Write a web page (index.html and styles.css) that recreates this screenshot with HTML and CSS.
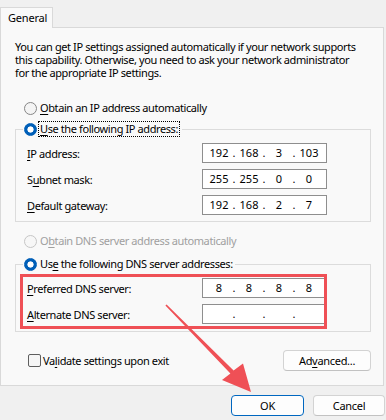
FILE: index.html
```html
<!DOCTYPE html>
<html lang="en">
<head>
<meta charset="utf-8">
<title>IPv4 Properties</title>
<link rel="stylesheet" href="styles.css">
</head>
<body>
<div class="window">
  <div class="tabs"><div class="tab">General</div></div>
  <div class="panel">
    <p class="intro">You can get IP settings assigned automatically if your network supports<br>this capability. Otherwise, you need to ask your network administrator<br>for the appropriate IP settings.</p>

    <div class="radio-row row-auto-ip"><span class="radio"></span><span class="lbl"><u>O</u>btain an IP address automatically</span></div>

    <fieldset class="group group-ip">
      <legend class="radio-row"><span class="radio checked"></span><span class="lbl focus"><u>U</u>se the following IP address:</span></legend>
      <div class="field"><span class="flabel"><u>I</u>P address:</span>
        <div class="ipbox"><span class="seg">192</span><span class="dot">.</span><span class="seg">168</span><span class="dot">.</span><span class="seg">3</span><span class="dot">.</span><span class="seg">103</span></div></div>
      <div class="field"><span class="flabel">S<u>u</u>bnet mask:</span>
        <div class="ipbox"><span class="seg">255</span><span class="dot">.</span><span class="seg">255</span><span class="dot">.</span><span class="seg">0</span><span class="dot">.</span><span class="seg">0</span></div></div>
      <div class="field"><span class="flabel"><u>D</u>efault gateway:</span>
        <div class="ipbox"><span class="seg">192</span><span class="dot">.</span><span class="seg">168</span><span class="dot">.</span><span class="seg">2</span><span class="dot">.</span><span class="seg">7</span></div></div>
    </fieldset>

    <div class="radio-row row-auto-dns disabled"><span class="radio"></span><span class="lbl">O<u>b</u>tain DNS server address automatically</span></div>

    <fieldset class="group group-dns">
      <legend class="radio-row"><span class="radio checked"></span><span class="lbl">Us<u>e</u> the following DNS server addresses:</span></legend>
      <div class="field"><span class="flabel"><u>P</u>referred DNS server:</span>
        <div class="ipbox"><span class="seg">8</span><span class="dot">.</span><span class="seg">8</span><span class="dot">.</span><span class="seg">8</span><span class="dot">.</span><span class="seg">8</span></div></div>
      <div class="field"><span class="flabel"><u>A</u>lternate DNS server:</span>
        <div class="ipbox"><span class="seg"></span><span class="dot">.</span><span class="seg"></span><span class="dot">.</span><span class="seg"></span><span class="dot">.</span><span class="seg"></span></div></div>
    </fieldset>

    <div class="footer-row">
      <label class="check-row"><span class="checkbox"></span><span>Va<u>l</u>idate settings upon exit</span></label>
      <button class="btn btn-adv" type="button">Ad<u>v</u>anced...</button>
    </div>
  </div>

  <div class="buttons">
    <button class="btn btn-ok" type="button">OK</button>
    <button class="btn btn-cancel" type="button">Cancel</button>
  </div>

  <div class="highlight"></div>
  <svg class="arrow" width="386" height="420" viewBox="0 0 386 420">
    <polygon points="166.6,304.6 233.6,370.4 243,363.5 251,392 222,380 230.4,373.6 165.4,305.4" fill="#ef5056"/>
  </svg>
</div>
</body>
</html>
```

FILE: styles.css
```css
html, body {
  margin: 0;
  padding: 0;
}

body {
  background: #f0f0f0;
  font-family: "Noto Sans", "Open Sans", sans-serif;
  font-size: 11px;
  letter-spacing: -0.4px;
  color: #000;
}

.window {
  position: relative;
  width: 386px;
  height: 420px;
  overflow: hidden;
}

u {
  text-decoration-thickness: 1px;
  text-underline-offset: 2px;
}

/* Tab */
.tabs {
  display: flex;
  padding-top: 7px;
}

.tab {
  position: relative;
  z-index: 1;
  box-sizing: border-box;
  width: 53px;
  height: 21px;
  margin-bottom: -1px;
  padding-left: 7px;
  line-height: 19px;
  letter-spacing: -0.2px;
  background: #f9f9f9;
  border: 1px solid #d9d9d9;
  border-bottom: none;
}

/* Panel */
.panel {
  box-sizing: border-box;
  width: 384px;
  padding: 12px 12px 14px 14px;
  background: #f9f9f9;
  border: 1px solid #d9d9d9;
}

.intro {
  margin: 0;
  line-height: 13px;
  white-space: nowrap;
}

.radio-row {
  display: flex;
  align-items: center;
  height: 16px;
  line-height: 16px;
}

.radio {
  flex: none;
  box-sizing: border-box;
  width: 13px;
  height: 13px;
  margin-right: 3px;
  border-radius: 50%;
  border: 1px solid #868686;
  background: #f4f4f4;
}

.radio.checked {
  border-color: #005fb8;
  background: radial-gradient(circle, #ffffff 0 2.8px, #005fb8 3.4px);
}

.disabled {
  color: #a0a0a0;
}

.disabled .radio {
  border-color: #c6c6c6;
  background: #f7f7f7;
}

.row-auto-ip {
  margin: 21px 0 0 9px;
}

.row-auto-dns {
  margin: 11px 0 0 9px;
}

.lbl.focus {
  box-sizing: border-box;
  height: 16px;
  padding: 0 1px;
  margin-left: -2px;
  line-height: 14px;
  border: 1px dotted #000;
}

/* Group boxes */
.group {
  margin: 5px 0 0 0;
  min-width: 0;
  padding: 6px 10px 6px 7px;
  border: 1px solid #dcdcdc;
}

.group-dns {
  margin-top: 7px;
  padding-bottom: 7px;
}

.group legend {
  padding: 0 2px 0 1px;
}

.field {
  display: grid;
  grid-template-columns: 175px 125px;
  align-items: center;
  padding-left: 4px;
  height: 20px;
}

.field + .field {
  margin-top: 6px;
}

.ipbox {
  box-sizing: border-box;
  display: flex;
  width: 125px;
  height: 20px;
  padding-left: 4px;
  background: #fff;
  border: 1px solid #8e8e8e;
  line-height: 18px;
  letter-spacing: 0;
}

.seg {
  width: 24px;
  text-align: center;
}

.dot {
  width: 6px;
  text-align: center;
}

/* Footer inside panel */
.footer-row {
  display: flex;
  align-items: center;
  justify-content: space-between;
  margin-top: 18px;
  height: 21px;
}

.check-row {
  display: flex;
  align-items: center;
  margin-left: 13px;
}

.checkbox {
  box-sizing: border-box;
  width: 13px;
  height: 13px;
  margin-right: 2px;
  border: 1px solid #5e5e5e;
  border-radius: 2px;
  background: #f6f6f6;
}

.btn {
  box-sizing: border-box;
  height: 21px;
  padding: 0;
  font-family: inherit;
  font-size: 11px;
  letter-spacing: -0.3px;
  color: #000;
  background: #fdfdfd;
  border: 1px solid #d3d3d3;
  border-bottom-color: #c2c2c2;
  border-radius: 4px;
}

.btn-adv {
  width: 88px;
}

.buttons {
  display: flex;
  justify-content: flex-end;
  gap: 9px;
  margin-top: 9px;
  padding-right: 1px;
}

.btn-ok {
  width: 73px;
  border-color: #0067c0;
}

.btn-cancel {
  width: 72px;
}

/* Annotations */
.highlight {
  position: absolute;
  left: 20px;
  top: 274px;
  width: 307px;
  height: 55px;
  box-sizing: border-box;
  border: 3px solid #ef5056;
}

.arrow {
  position: absolute;
  left: 0;
  top: 0;
  pointer-events: none;
}
```
